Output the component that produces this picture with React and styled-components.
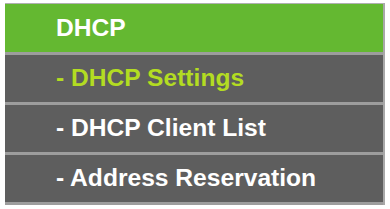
import React from "react";
import styled, { createGlobalStyle } from "styled-components";

const Global = createGlobalStyle`
  html, body { margin: 0; padding: 0; background: #ffffff; }
  body { font-family: "Liberation Sans", Arial, sans-serif; }
`;

const Menu = styled.nav`
  margin: 3px 0 0 5px;
  width: 380px;
  display: flex;
  flex-direction: column;
  border-top: 1px solid #b0b0b0;
  border-right: 2px solid #a8a8a8;
  box-sizing: border-box;
`;

const Item = styled.div`
  height: ${(p) => (p.$head ? 48 : 47)}px;
  display: flex;
  align-items: center;
  padding-left: 51px;
  background: ${(p) => (p.$head ? "#64b831" : "#5e5e5e")};
  border-bottom: 3px solid #9d9d9d;
  color: ${(p) => (p.$active ? "#b3dc22" : "#ffffff")};
  font-family: "Liberation Sans", Arial, sans-serif;
  font-weight: bold;
  font-size: 24.6px;
  line-height: 1;
  white-space: nowrap;
`;

const items = [
  { label: "- DHCP Settings", active: true },
  { label: "- DHCP Client List" },
  { label: "- Address Reservation" },
];

export default function App() {
  return (
    <>
      <Global />
      <Menu>
        <Item $head>DHCP</Item>
        {items.map((it) => (
          <Item key={it.label} $active={it.active}>
            {it.label}
          </Item>
        ))}
      </Menu>
    </>
  );
}
